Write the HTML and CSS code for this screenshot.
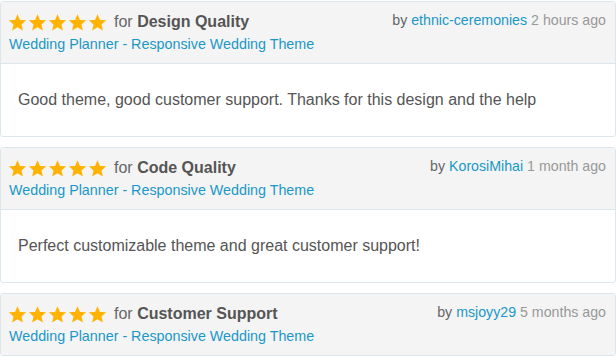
FILE: index.html
```html
<!DOCTYPE html>
<html lang="en">

<head>
  <meta charset="UTF-8">
  <meta name="viewport" content="width=device-width, initial-scale=1.0">
  <title>Reviews</title>
  <link rel="stylesheet" href="styles.css">
</head>

<body>
  <svg width="0" height="0" class="defs">
    <defs>
      <symbol id="star" viewBox="0 0 24 24">
        <path d="M12 1.5l3.1 7.2 7.8.6-5.9 5.1 1.8 7.6L12 17.9 5.2 22l1.8-7.6-5.9-5.1 7.8-.6z" />
      </symbol>
    </defs>
  </svg>

  <!-- 评论列表 -->
  <div class="review">
    <div class="review-head">
      <div class="head-left">
        <div class="rating">
          <span class="stars">
            <svg><use href="#star" /></svg><svg><use href="#star" /></svg><svg><use href="#star" /></svg><svg><use href="#star" /></svg><svg><use href="#star" /></svg>
          </span>
          <span class="for">for <b>Design Quality</b></span>
        </div>
        <a class="item" href="#">Wedding Planner - Responsive Wedding Theme</a>
      </div>
      <div class="meta">by <a href="#">ethnic-ceremonies</a> <span class="time">2 hours ago</span></div>
    </div>
    <div class="review-body">Good theme, good customer support. Thanks for this design and the help</div>
  </div>

  <div class="review">
    <div class="review-head">
      <div class="head-left">
        <div class="rating">
          <span class="stars">
            <svg><use href="#star" /></svg><svg><use href="#star" /></svg><svg><use href="#star" /></svg><svg><use href="#star" /></svg><svg><use href="#star" /></svg>
          </span>
          <span class="for">for <b>Code Quality</b></span>
        </div>
        <a class="item" href="#">Wedding Planner - Responsive Wedding Theme</a>
      </div>
      <div class="meta">by <a href="#">KorosiMihai</a> <span class="time">1 month ago</span></div>
    </div>
    <div class="review-body">Perfect customizable theme and great customer support!</div>
  </div>

  <div class="review">
    <div class="review-head">
      <div class="head-left">
        <div class="rating">
          <span class="stars">
            <svg><use href="#star" /></svg><svg><use href="#star" /></svg><svg><use href="#star" /></svg><svg><use href="#star" /></svg><svg><use href="#star" /></svg>
          </span>
          <span class="for">for <b>Customer Support</b></span>
        </div>
        <a class="item" href="#">Wedding Planner - Responsive Wedding Theme</a>
      </div>
      <div class="meta">by <a href="#">msjoyy29</a> <span class="time">5 months ago</span></div>
    </div>
  </div>
</body>

</html>
```

FILE: styles.css
```css
/* 全局样式 */
body {
  margin: 0;
  padding: 1px 0 0;
  background: #fff;
  font-family: "Liberation Sans", Arial, sans-serif;
  color: #555;
  overflow: hidden;
}

.defs {
  position: absolute;
}

a {
  color: #1a98c8;
  text-decoration: none;
}

/* 评论卡片 */
.review {
  border: 1px solid #dde6ea;
  border-radius: 3px;
  margin-bottom: 10px;
  width: 614px;
}

.review-head {
  background: #f4f4f4;
  border-bottom: 1px solid #dde6ea;
  display: flex;
  justify-content: space-between;
  padding: 8px 9px 8px 7px;
}

.review-head:last-child {
  border-bottom: none;
  border-radius: 3px;
}

.rating {
  display: flex;
  align-items: center;
  height: 24px;
}

.stars {
  display: flex;
  gap: 1px;
  margin-right: 7px;
}

.stars svg {
  width: 19px;
  height: 19px;
  fill: #ffb300;
}

.for {
  font-size: 16px;
  color: #666;
}

.for b {
  color: #555;
}

.item {
  display: block;
  font-size: 14.3px;
  line-height: 21px;
  margin-left: 1px;
}

.meta {
  font-size: 14.2px;
  color: #666;
  line-height: 24px;
  margin-top: -2px;
}

.time {
  color: #999;
}

.review-body {
  padding: 27px 17px;
  font-size: 16px;
  line-height: 18px;
  color: #555;
}
```
